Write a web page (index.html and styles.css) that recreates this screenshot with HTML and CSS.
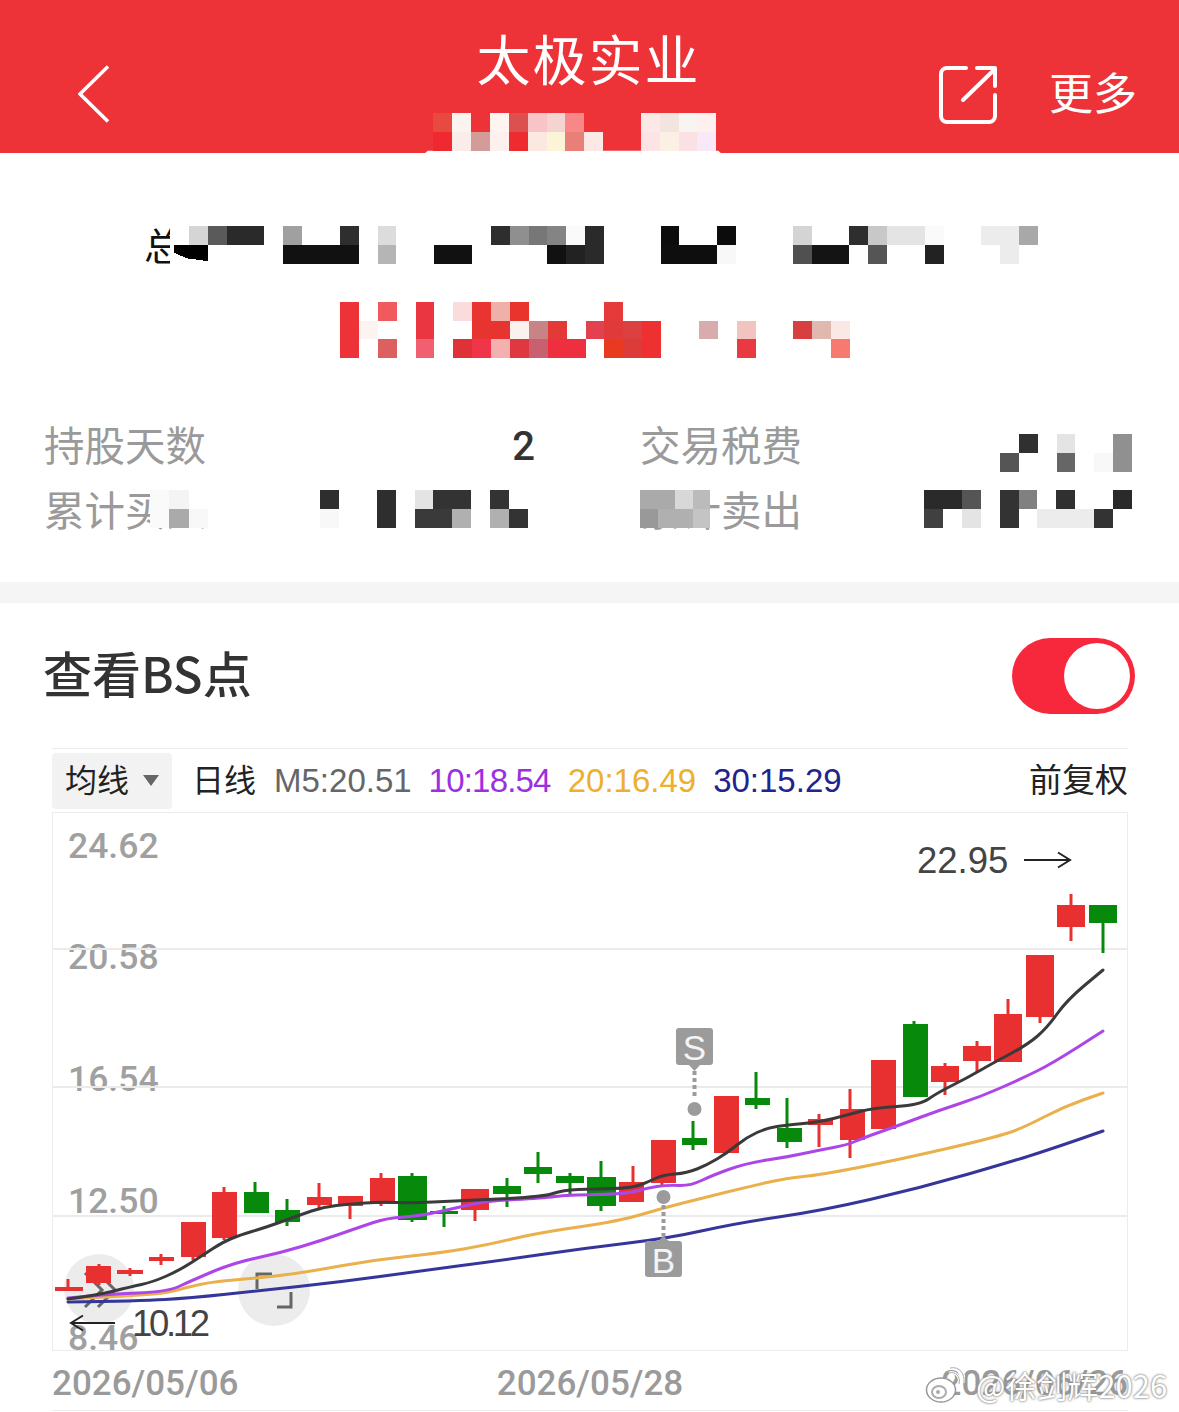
FILE: index.html
```html
<!DOCTYPE html>
<html lang="zh-CN">
<head>
    <meta charset="UTF-8">
    <title>太极实业</title>
    <link rel="stylesheet" href="styles.css">
</head>
<body>
<div class="page">

    <header class="topbar">
        <svg class="back-icon" viewBox="0 0 32 58"><path d="M30 1.5 2 29l28 27.500"/></svg>
        <h1 class="stock-name">太极实业</h1>
        <div class="top-actions">
            <svg class="share-icon" viewBox="0 0 58 58">
                <path d="M27 2H8a6 6 0 0 0-6 6v42a6 6 0 0 0 6 6h42a6 6 0 0 0 6-6V29"/>
                <path d="M24 34 55 4M38 2h18v18"/>
            </svg>
            <span class="more">更多</span>
        </div>
        <svg class="code-mosaic" viewBox="-0.5 0 15.8 2.17">
            <polygon points="-0.5,2.17 15.3,2.17 15.1,2 -0.3,2" fill="#fff"/>
            <g shape-rendering="crispEdges">
            <rect x="0" y="0" width="1" height="1" fill="#e84a40"/>
            <rect x="1" y="0" width="1" height="1" fill="#fcf2ee"/>
            <rect x="3" y="0" width="1" height="1" fill="#fff4f0"/>
            <rect x="4" y="0" width="1" height="1" fill="#dd5050"/>
            <rect x="5" y="0" width="1" height="1" fill="#f8c4c8"/>
            <rect x="6" y="0" width="1" height="1" fill="#f4d4d0"/>
            <rect x="7" y="0" width="1" height="1" fill="#f88888"/>
            <rect x="11" y="0" width="1" height="1" fill="#fde8e8"/>
            <rect x="12" y="0" width="1" height="1" fill="#f4e4e0"/>
            <rect x="13" y="0" width="1" height="1" fill="#f8f4f0"/>
            <rect x="14" y="0" width="1" height="1" fill="#fff0f0"/>
            <rect x="0" y="1" width="1" height="1" fill="#f02830"/>
            <rect x="1" y="1" width="1" height="1" fill="#faece8"/>
            <rect x="2" y="1" width="1" height="1" fill="#d49c98"/>
            <rect x="3" y="1" width="1" height="1" fill="#fff0f0"/>
            <rect x="4" y="1" width="1" height="1" fill="#ee2c30"/>
            <rect x="5" y="1" width="1" height="1" fill="#fbe8e0"/>
            <rect x="6" y="1" width="1" height="1" fill="#fcf4d8"/>
            <rect x="7" y="1" width="1" height="1" fill="#e88078"/>
            <rect x="8" y="1" width="1" height="1" fill="#fce8e4"/>
            <rect x="11" y="1" width="1" height="1" fill="#fde4e4"/>
            <rect x="12" y="1" width="1" height="1" fill="#fcf0e4"/>
            <rect x="13" y="1" width="1" height="1" fill="#fbe0e4"/>
            <rect x="14" y="1" width="1" height="1" fill="#f8e8f8"/>
            </g>
        </svg>
    </header>

    <section class="summary">
        <div class="total-row">
            <span class="total-label"><span>总</span></span>
            <svg class="total-mosaic" viewBox="0 0 46 2" preserveAspectRatio="none" shape-rendering="crispEdges">
                <rect x="1" y="0" width="1" height="1" fill="#d5d5d5"/>
                <rect x="2" y="0" width="1" height="1" fill="#5a5a5a"/>
                <rect x="3" y="0" width="2" height="1" fill="#2a2a2a"/>
                <rect x="6" y="0" width="1" height="1" fill="#a0a0a0"/>
                <rect x="9" y="0" width="1" height="1" fill="#2e2e2e"/>
                <rect x="11" y="0" width="1" height="1" fill="#dcdcdc"/>
                <rect x="17" y="0" width="1" height="1" fill="#2e2e2e"/>
                <rect x="18" y="0" width="1" height="1" fill="#8f8f8f"/>
                <rect x="19" y="0" width="1" height="1" fill="#777"/>
                <rect x="20" y="0" width="1" height="1" fill="#848484"/>
                <rect x="21" y="0" width="1" height="1" fill="#fafafa"/>
                <rect x="22" y="0" width="1" height="1" fill="#2a2a2a"/>
                <rect x="26" y="0" width="1" height="1" fill="#0c0c0c"/>
                <rect x="29" y="0" width="1" height="1" fill="#0c0c0c"/>
                <rect x="33" y="0" width="1" height="1" fill="#d4d4d4"/>
                <rect x="36" y="0" width="1" height="1" fill="#2e2e2e"/>
                <rect x="37" y="0" width="1" height="1" fill="#c8c8c8"/>
                <rect x="38" y="0" width="2" height="1" fill="#e4e4e4"/>
                <rect x="40" y="0" width="1" height="1" fill="#fafafa"/>
                <rect x="43" y="0" width="2" height="1" fill="#ececec"/>
                <rect x="45" y="0" width="1" height="1" fill="#a8a8a8"/>
                <polygon points="0.2,1 2,1 2,1.85 0.9,1.7 0.2,1.4" fill="#000"/>
                <rect x="6" y="1" width="4" height="1" fill="#111"/>
                <rect x="11" y="1" width="1" height="1" fill="#b5b5b5"/>
                <rect x="14" y="1" width="2" height="1" fill="#111"/>
                <rect x="20" y="1" width="1" height="1" fill="#111"/>
                <rect x="21" y="1" width="1" height="1" fill="#222"/>
                <rect x="22" y="1" width="1" height="1" fill="#2a2a2a"/>
                <rect x="26" y="1" width="3" height="1" fill="#0e0e0e"/>
                <rect x="29" y="1" width="1" height="1" fill="#f8f8f8"/>
                <rect x="33" y="1" width="1" height="1" fill="#505050"/>
                <rect x="34" y="1" width="2" height="1" fill="#141414"/>
                <rect x="37" y="1" width="1" height="1" fill="#555"/>
                <rect x="40" y="1" width="1" height="1" fill="#222"/>
                <rect x="44" y="1" width="1" height="1" fill="#ececec"/>
            </svg>
        </div>

        <div class="profit-row">
            <svg class="profit-mosaic" viewBox="0 0 27 3" preserveAspectRatio="none" shape-rendering="crispEdges">
                <rect x="0" y="0" width="1" height="3" fill="#ee3338"/>
                <rect x="2" y="0" width="1" height="1" fill="#f05a5e"/>
                <rect x="4" y="0" width="1" height="2" fill="#ea3640"/>
                <rect x="6" y="0" width="1" height="1" fill="#fadcdc"/>
                <rect x="7" y="0" width="1" height="1" fill="#e93530"/>
                <rect x="8" y="0" width="1" height="1" fill="#eeb0a8"/>
                <rect x="9" y="0" width="1" height="1" fill="#e8342c"/>
                <rect x="14" y="0" width="1" height="1" fill="#e63a3a"/>
                <rect x="1" y="1" width="1" height="1" fill="#fdf3f0"/>
                <rect x="7" y="1" width="2" height="1" fill="#e83430"/>
                <rect x="9" y="1" width="1" height="1" fill="#faf2ee"/>
                <rect x="10" y="1" width="1" height="1" fill="#c88484"/>
                <rect x="11" y="1" width="1" height="1" fill="#e33a38"/>
                <rect x="13" y="1" width="1" height="1" fill="#e34050"/>
                <rect x="14" y="1" width="1" height="1" fill="#e03a3a"/>
                <rect x="15" y="1" width="1" height="1" fill="#dd4040"/>
                <rect x="16" y="1" width="1" height="1" fill="#ee3030"/>
                <rect x="19" y="1" width="1" height="1" fill="#d8acac"/>
                <rect x="21" y="1" width="1" height="1" fill="#f2c4c0"/>
                <rect x="24" y="1" width="1" height="1" fill="#d84040"/>
                <rect x="25" y="1" width="1" height="1" fill="#e0b8b0"/>
                <rect x="26" y="1" width="1" height="1" fill="#fae8e4"/>
                <rect x="2" y="2" width="1" height="1" fill="#dd6060"/>
                <rect x="4" y="2" width="1" height="1" fill="#f06070"/>
                <rect x="6" y="2" width="1" height="1" fill="#e03038"/>
                <rect x="7" y="2" width="1" height="1" fill="#f0354a"/>
                <rect x="8" y="2" width="1" height="1" fill="#f4b0b0"/>
                <rect x="9" y="2" width="1" height="1" fill="#e03840"/>
                <rect x="10" y="2" width="1" height="1" fill="#c86070"/>
                <rect x="11" y="2" width="2" height="1" fill="#ee2f40"/>
                <rect x="14" y="2" width="1" height="1" fill="#e83a20"/>
                <rect x="15" y="2" width="1" height="1" fill="#dd3a3a"/>
                <rect x="16" y="2" width="1" height="1" fill="#ee3030"/>
                <rect x="21" y="2" width="1" height="1" fill="#e83a40"/>
                <rect x="26" y="2" width="1" height="1" fill="#f77a70"/>
            </svg>
        </div>

        <div class="stats">
            <div class="stat">
                <span class="stat-label">持股天数</span>
                <span class="stat-value">2</span>
            </div>
            <div class="stat">
                <span class="stat-label">交易税费</span>
                <svg class="mosaic-small" viewBox="0 0 7 2" preserveAspectRatio="none" shape-rendering="crispEdges">
                    <rect x="1" y="0" width="1" height="1" fill="#303030"/>
                    <rect x="3" y="0" width="1" height="1" fill="#e4e4e4"/>
                    <rect x="6" y="0" width="1" height="2" fill="#909090"/>
                    <rect x="0" y="1" width="1" height="1" fill="#555"/>
                    <rect x="3" y="1" width="1" height="1" fill="#666"/>
                    <rect x="5" y="1" width="1" height="1" fill="#f8f8f8"/>
                </svg>
            </div>
            <div class="stat">
                <span class="stat-label">累计买入
                    <svg class="label-mask mask-buy" viewBox="0 0 3 2" preserveAspectRatio="none" shape-rendering="crispEdges">
                        <rect width="3" height="2.2" fill="#fff"/>
                        <rect x="0" y="0" width="1" height="2" fill="#fafafa"/>
                        <rect x="1" y="0" width="1" height="1" fill="#f4f4f4"/>
                        <rect x="1" y="1" width="1" height="1" fill="#aaa"/>
                        <rect x="2" y="1" width="1" height="1" fill="#f8f8f8"/>
                    </svg>
                </span>
                <svg class="mosaic-wide left-value" viewBox="0 0 11 2" preserveAspectRatio="none" shape-rendering="crispEdges">
                    <rect x="0" y="0" width="1" height="1" fill="#2e2e2e"/>
                    <rect x="3" y="0" width="1" height="2" fill="#2e2e2e"/>
                    <rect x="5" y="0" width="1" height="1" fill="#e4e4e4"/>
                    <rect x="6" y="0" width="2" height="1" fill="#333"/>
                    <rect x="9" y="0" width="1" height="1" fill="#333"/>
                    <rect x="0" y="1" width="1" height="1" fill="#f8f8f8"/>
                    <rect x="5" y="1" width="2" height="1" fill="#3a3a3a"/>
                    <rect x="7" y="1" width="1" height="1" fill="#b0b0b0"/>
                    <rect x="9" y="1" width="1" height="1" fill="#b0b0b0"/>
                    <rect x="10" y="1" width="1" height="1" fill="#333"/>
                </svg>
            </div>
            <div class="stat">
                <span class="stat-label">累计卖出
                    <svg class="label-mask mask-sell" viewBox="0 0 4 2" preserveAspectRatio="none" shape-rendering="crispEdges">
                        <rect x="0" y="0" width="2" height="1" fill="#aaa"/>
                        <rect x="2" y="0" width="1" height="1" fill="#d8d8d8"/>
                        <rect x="3" y="0" width="1" height="1" fill="#bbb"/>
                        <rect x="0" y="1" width="1" height="1" fill="#999"/>
                        <rect x="1" y="1" width="2" height="1" fill="#b0b0b0"/>
                        <rect x="3" y="1" width="1" height="1" fill="#c4c4c4"/>
                    </svg>
                </span>
                <svg class="mosaic-wide" viewBox="0 0 11 2" preserveAspectRatio="none" shape-rendering="crispEdges">
                    <rect x="0" y="0" width="2" height="1" fill="#2a2a2a"/>
                    <rect x="2" y="0" width="1" height="1" fill="#555"/>
                    <rect x="4" y="0" width="1" height="2" fill="#333"/>
                    <rect x="5" y="0" width="1" height="1" fill="#808080"/>
                    <rect x="7" y="0" width="1" height="1" fill="#303030"/>
                    <rect x="10" y="0" width="1" height="1" fill="#2a2a2a"/>
                    <rect x="0" y="1" width="1" height="1" fill="#404040"/>
                    <rect x="2" y="1" width="1" height="1" fill="#e4e4e4"/>
                    <rect x="6" y="1" width="3" height="1" fill="#ececec"/>
                    <rect x="9" y="1" width="1" height="1" fill="#333"/>
                </svg>
            </div>
        </div>
    </section>

    <div class="band"></div>

    <section class="bs-head">
        <h2 class="bs-title">查看BS点</h2>
        <div class="switch"><span class="switch-knob"></span></div>
    </section>

    <section class="kline">
        <div class="kline-bar">
            <span class="ma-select">均线<i class="caret"></i></span>
            <span class="period">日线</span>
            <span class="ma ma5">M5:20.51</span>
            <span class="ma ma10">10:18.54</span>
            <span class="ma ma20">20:16.49</span>
            <span class="ma ma30">30:15.29</span>
            <span class="adjust">前复权</span>
        </div>

        <svg class="chart" viewBox="52 812 1076 539">
            <rect x="52.500" y="812.500" width="1075" height="538" fill="#fff" stroke="#ececec"/>

            <text class="axis" x="68" y="858">24.62</text>
            <text class="axis" x="68" y="969">20.58</text>
            <text class="axis" x="68" y="1091">16.54</text>
            <text class="axis" x="68" y="1213">12.50</text>
            <text class="axis" x="68" y="1350">8.46</text>
            <path class="grid" d="M53 949H1127M53 1087H1127M53 1216H1127"/>

            <circle class="round-btn" cx="99" cy="1289" r="35"/>
            <circle class="round-btn" cx="274" cy="1290" r="36"/>
            <path class="btn-icon" d="M85 1273l17 17-17 17M98 1273l17 17-17 17"/>
            <path class="btn-icon" d="M272 1274H257V1289M277 1307H291V1292"/>

            <g class="up">
                <path d="M68 1279V1290M99 1264V1285M130 1268V1276M161 1254V1265M193 1222V1260M224 1187V1240M319 1183V1208M350 1196V1219M381 1173V1206M475 1189V1221M633 1166V1202M662 1140V1185M819 1114V1147M850 1089V1158M945 1063V1095M977 1041V1072M1008 999V1062M1040 955V1023M1071 894V941"/>
                <rect x="55" y="1287" width="28" height="4"/>
                <rect x="86" y="1266" width="25" height="17"/>
                <rect x="117" y="1270" width="26" height="4"/>
                <rect x="149" y="1257" width="25" height="4"/>
                <rect x="181" y="1222" width="25" height="35"/>
                <rect x="212" y="1192" width="25" height="46"/>
                <rect x="307" y="1197" width="25" height="8"/>
                <rect x="338" y="1196" width="25" height="10"/>
                <rect x="370" y="1178" width="25" height="26"/>
                <rect x="461" y="1189" width="28" height="21"/>
                <rect x="619" y="1182" width="25" height="20"/>
                <rect x="651" y="1140" width="25" height="43"/>
                <rect x="714" y="1096" width="25" height="57"/>
                <rect x="808" y="1119" width="25" height="6"/>
                <rect x="840" y="1109" width="25" height="31"/>
                <rect x="871" y="1060" width="25" height="69"/>
                <rect x="931" y="1066" width="28" height="16"/>
                <rect x="963" y="1046" width="28" height="15"/>
                <rect x="994" y="1014" width="28" height="48"/>
                <rect x="1026" y="955" width="28" height="62"/>
                <rect x="1057" y="905" width="28" height="22"/>
            </g>
            <g class="down">
                <path d="M255 1182V1213M287 1199V1226M412 1173V1222M444 1206V1227M507 1178V1207M538 1152V1183M570 1173V1195M601 1161V1211M693 1121V1150M756 1072V1109M787 1098V1148M914 1021V1097M1103 905V953"/>
                <rect x="244" y="1192" width="25" height="21"/>
                <rect x="275" y="1210" width="25" height="12"/>
                <rect x="398" y="1176" width="29" height="44"/>
                <rect x="430" y="1211" width="28" height="3"/>
                <rect x="493" y="1186" width="28" height="8"/>
                <rect x="524" y="1167" width="28" height="7"/>
                <rect x="556" y="1176" width="28" height="7"/>
                <rect x="587" y="1177" width="29" height="29"/>
                <rect x="682" y="1138" width="25" height="7"/>
                <rect x="745" y="1098" width="25" height="7"/>
                <rect x="777" y="1128" width="25" height="14"/>
                <rect x="903" y="1024" width="25" height="73"/>
                <rect x="1089" y="905" width="28" height="18"/>
            </g>

            <path class="line line-30" data-points="68,1302 140,1301 190,1298 257,1291 340,1282 420,1271 503,1260 587,1248 670,1238 737,1223 820,1211 920,1188 1017,1160 1060,1146 1103,1131"/>
            <path class="line line-20" data-points="68,1299 140,1295 167,1293 207,1282 260,1278 307,1272 373,1260 440,1253 487,1245 537,1233 620,1221 663,1208 703,1198 747,1187 787,1178 820,1175 897,1160 993,1138 1023,1128 1063,1107 1103,1093"/>
            <path class="line line-10" data-points="68,1298 107,1294 167,1292 193,1280 233,1263 280,1253 323,1240 360,1227 387,1218 420,1216 460,1207 487,1201 543,1198 567,1195 627,1194 647,1188 667,1185 690,1186 713,1175 747,1163 787,1157 820,1150 847,1145 863,1138 897,1126 940,1110 980,1097 1023,1078 1053,1063 1103,1031"/>
            <path class="line line-5" data-points="68,1299 98,1295 130,1287 153,1282 180,1270 203,1255 223,1242 240,1235 267,1227 300,1215 323,1207 350,1204 380,1202 413,1203 453,1201 543,1197 563,1190 593,1189 633,1188 650,1181 663,1175 687,1173 707,1165 727,1153 747,1137 767,1128 787,1125 820,1122 847,1115 873,1108 920,1105 937,1093 967,1078 993,1063 1027,1045 1047,1028 1067,1000 1103,970"/>

            <g class="bs-mark">
                <rect x="676" y="1028" width="37" height="37" rx="3"/>
                <path d="M688 1064h13l-6.500 7z"/>
                <path class="dots" d="M694.500 1071V1098"/>
                <circle cx="694.500" cy="1109" r="7"/>
                <text x="694.500" y="1060">S</text>
            </g>
            <g class="bs-mark">
                <rect x="645" y="1241" width="37" height="36" rx="3"/>
                <path d="M657 1242h13l-6.500-6z"/>
                <path class="dots" d="M663.500 1205V1236"/>
                <circle cx="663.500" cy="1197" r="7"/>
                <text x="663.500" y="1273">B</text>
            </g>

            <text class="price" x="917" y="873">22.95</text>
            <path class="price-arrow" d="M1024 860H1070M1058 852.500 1070 860 1058 867.500"/>
            <text class="price price-low" x="132" y="1336">10.12</text>
            <path class="price-arrow" d="M115 1323H71M83 1315.500 71 1323 83 1330.500"/>
        </svg>

        <div class="dates">
            <span>2026/05/06</span>
            <span>2026/05/28</span>
            <span>2026/06/26</span>
        </div>
    </section>

    <div class="watermark">
        <svg class="weibo" viewBox="0 0 40 38">
            <ellipse cx="16" cy="24" rx="14.500" ry="12" fill="#fff" stroke="#999" stroke-width="1.500"/>
            <ellipse cx="14" cy="26" rx="7" ry="6" fill="#fff" stroke="#aaa" stroke-width="2"/>
            <circle cx="13" cy="26" r="2" fill="#aaa"/>
            <path d="M24 7c6-2 12 3 10 11M25 2c10-2 15 6 14 15" fill="none" stroke="#fff" stroke-width="3"/>
            <path d="M24 7c6-2 12 3 10 11M25 2c10-2 15 6 14 15" fill="none" stroke="#aaa" stroke-width="1"/>
        </svg>
        <span class="wm-text">@徐剑辉2026</span>
    </div>

</div>
<script src="chart.js"></script>
</body>
</html>
```

FILE: styles.css
```css
* {
    box-sizing: border-box;
}
body {
    margin: 0;
    background-color: #fff;
    font-family: "Noto Sans CJK SC", "Noto Sans", sans-serif;
}
svg {
    display: block;
}
.page {
    position: relative;
    width: 1179px;
    height: 1412px;
    overflow: hidden;
}

/* top bar */
.topbar {
    position: relative;
    display: grid;
    grid-template-columns: 1fr auto 1fr;
    height: 153px;
    padding: 0 42px 0 78px;
    background-color: #ee3338;
    color: #fff;
}
.back-icon {
    width: 32px;
    height: 58px;
    margin-top: 65px;
}
.back-icon path {
    fill: none;
    stroke: #fff;
    stroke-width: 3.500;
}
.stock-name {
    margin: 19px 0 0;
    font-size: 54px;
    font-weight: 400;
    line-height: 78px;
    letter-spacing: 2px;
    transform: translateX(-19px);
}
.top-actions {
    display: flex;
    justify-content: flex-end;
    align-items: flex-start;
    gap: 52px;
}
.share-icon {
    width: 58px;
    height: 58px;
    margin-top: 66px;
}
.share-icon path {
    fill: none;
    stroke: #fff;
    stroke-width: 4;
    stroke-linecap: round;
    stroke-linejoin: round;
}
.more {
    margin-top: 60px;
    font-size: 44px;
    line-height: 62px;
}
.code-mosaic {
    position: absolute;
    left: 424px;
    top: 113px;
    width: 298px;
    height: 41px;
}

/* summary */
.summary {
    padding-top: 73px;
}
.total-row {
    display: flex;
    height: 38px;
    padding-left: 144px;
}
.total-label {
    width: 26px;
    overflow: hidden;
    font-size: 38px;
    line-height: 36px;
    color: #111;
    white-space: nowrap;
}
.total-mosaic {
    width: 868px;
    height: 38px;
}
.profit-row {
    margin-top: 38px;
    padding-left: 340px;
}
.profit-mosaic {
    width: 510px;
    height: 56px;
}
.stats {
    display: grid;
    grid-template-columns: 491px 492px;
    grid-auto-rows: 65px;
    column-gap: 105px;
    margin-top: 53px;
    padding-left: 44px;
}
.stat {
    display: flex;
    justify-content: space-between;
    align-items: center;
}
.stat-label {
    position: relative;
    font-size: 40.500px;
    line-height: 65px;
    color: #9a9a9a;
}
.stat-value {
    margin-top: 6px;
    font-family: Roboto, sans-serif;
    font-size: 40px;
    font-weight: 500;
    color: #333;
}
.mosaic-small {
    width: 132px;
    height: 38px;
    margin-top: 18px;
}
.mosaic-wide {
    width: 208px;
    height: 38px;
}
.left-value {
    margin-right: 7px;
}
.label-mask {
    position: absolute;
    top: 14px;
    height: 38px;
}
.mask-buy {
    left: 106px;
    width: 58px;
}
.mask-sell {
    left: 0;
    width: 70px;
}

.band {
    height: 21px;
    margin-top: 41px;
    background-color: #f5f5f5;
}

/* BS switch */
.bs-head {
    display: flex;
    justify-content: space-between;
    align-items: center;
    height: 145px;
    padding: 0 44px;
}
.bs-title {
    margin: -8px 0 0 -1px;
    font-size: 49px;
    font-weight: 500;
    color: #333;
}
.switch {
    display: flex;
    justify-content: flex-end;
    align-items: center;
    width: 123px;
    height: 76px;
    padding-right: 5px;
    border-radius: 38px;
    background-color: #f8283c;
}
.switch-knob {
    width: 66px;
    height: 66px;
    border-radius: 50%;
    background-color: #fff;
}

/* kline */
.kline {
    padding: 0 51px 0 52px;
}
.kline-bar {
    display: flex;
    align-items: center;
    height: 64px;
    border-top: 1px solid #ececec;
    font-family: "Liberation Sans", Arial, sans-serif;
    font-size: 33px;
}
.ma-select {
    display: flex;
    align-items: center;
    width: 120px;
    height: 56px;
    padding: 0 0 5px 13px;
    border-radius: 4px;
    background-color: #f2f2f2;
    font-family: "Noto Sans CJK SC", sans-serif;
    font-size: 32px;
    color: #222;
}
.caret {
    width: 0;
    height: 0;
    margin: 5px 0 0 14px;
    border-left: 8px solid transparent;
    border-right: 8px solid transparent;
    border-top: 11px solid #666;
}
.period {
    margin-left: 20px;
    padding-bottom: 6px;
    font-family: "Noto Sans CJK SC", sans-serif;
    font-size: 32px;
    color: #222;
}
.ma {
    white-space: nowrap;
}
.ma5 {
    margin-left: 18px;
    color: #666;
}
.ma10 {
    margin-left: 17px;
    letter-spacing: -0.800px;
    color: #9b30e0;
}
.ma20 {
    margin-left: 17px;
    color: #edb02e;
}
.ma30 {
    margin-left: 17px;
    color: #23238e;
}
.adjust {
    margin-left: auto;
    padding-bottom: 6px;
    font-family: "Noto Sans CJK SC", sans-serif;
    font-size: 33px;
    color: #222;
}
.chart {
    width: 1076px;
    height: 539px;
    overflow: visible;
}
.grid {
    fill: none;
    stroke: #ebebeb;
    stroke-width: 2;
}
.axis {
    font-family: Roboto, sans-serif;
    font-size: 35.500px;
    font-weight: 500;
    fill: #a0a0a0;
}
.round-btn {
    fill: #ececec;
}
.btn-icon {
    fill: none;
    stroke: #666;
    stroke-width: 3;
}
.up {
    fill: #e83030;
}
.up path {
    stroke: #e83030;
    stroke-width: 3;
}
.down {
    fill: #078a0c;
}
.down path {
    stroke: #078a0c;
    stroke-width: 3;
}
.line {
    fill: none;
    stroke-width: 3;
    stroke-linejoin: round;
    stroke-linecap: round;
}
.line-5 {
    stroke: #3a3a3a;
}
.line-10 {
    stroke: #ac46e8;
}
.line-20 {
    stroke: #e9b04c;
}
.line-30 {
    stroke: #35359a;
}
.bs-mark {
    fill: #9b9b9b;
}
.bs-mark text {
    font-family: "Liberation Sans", Arial, sans-serif;
    font-size: 35px;
    text-anchor: middle;
    fill: #f4f4f4;
}
.dots {
    fill: none;
    stroke: #9b9b9b;
    stroke-width: 4;
    stroke-dasharray: 4 3;
}
.price {
    font-family: "Liberation Sans", Arial, sans-serif;
    font-size: 36.500px;
    fill: #444;
}
.price-low {
    letter-spacing: -3.300px;
}
.price-arrow {
    fill: none;
    stroke: #222;
    stroke-width: 2;
}
.dates {
    display: flex;
    justify-content: space-between;
    align-items: center;
    height: 60px;
    padding-top: 6px;
    border-bottom: 1px solid #ececec;
    font-family: Roboto, sans-serif;
    font-size: 35px;
    font-weight: 500;
    color: #9a9a9a;
}

/* watermark sits over the last date */
.watermark {
    position: absolute;
    left: 925px;
    top: 1363px;
    display: flex;
    align-items: center;
    gap: 11px;
}
.weibo {
    width: 40px;
    height: 38px;
}
.wm-text {
    font-family: "Noto Sans CJK SC", sans-serif;
    font-size: 31px;
    line-height: 44px;
    color: #fff;
    white-space: nowrap;
    text-shadow: 0 0 2px #777, 0 0 3px #999;
}
```

FILE: chart.js
```js
// turn the moving average points into smooth curves
for (const line of document.querySelectorAll('.line')) {
    let pts = line.dataset.points.split(' ').map(p => p.split(',').map(Number));
    let d = `M${pts[0]}`;
    for (let i = 1; i < pts.length - 1; i++) {
        let mx = (pts[i][0] + pts[i + 1][0]) / 2;
        let my = (pts[i][1] + pts[i + 1][1]) / 2;
        d += `Q${pts[i]} ${mx},${my}`;
    }
    d += `L${pts[pts.length - 1]}`;
    line.setAttribute('d', d);
}
```
